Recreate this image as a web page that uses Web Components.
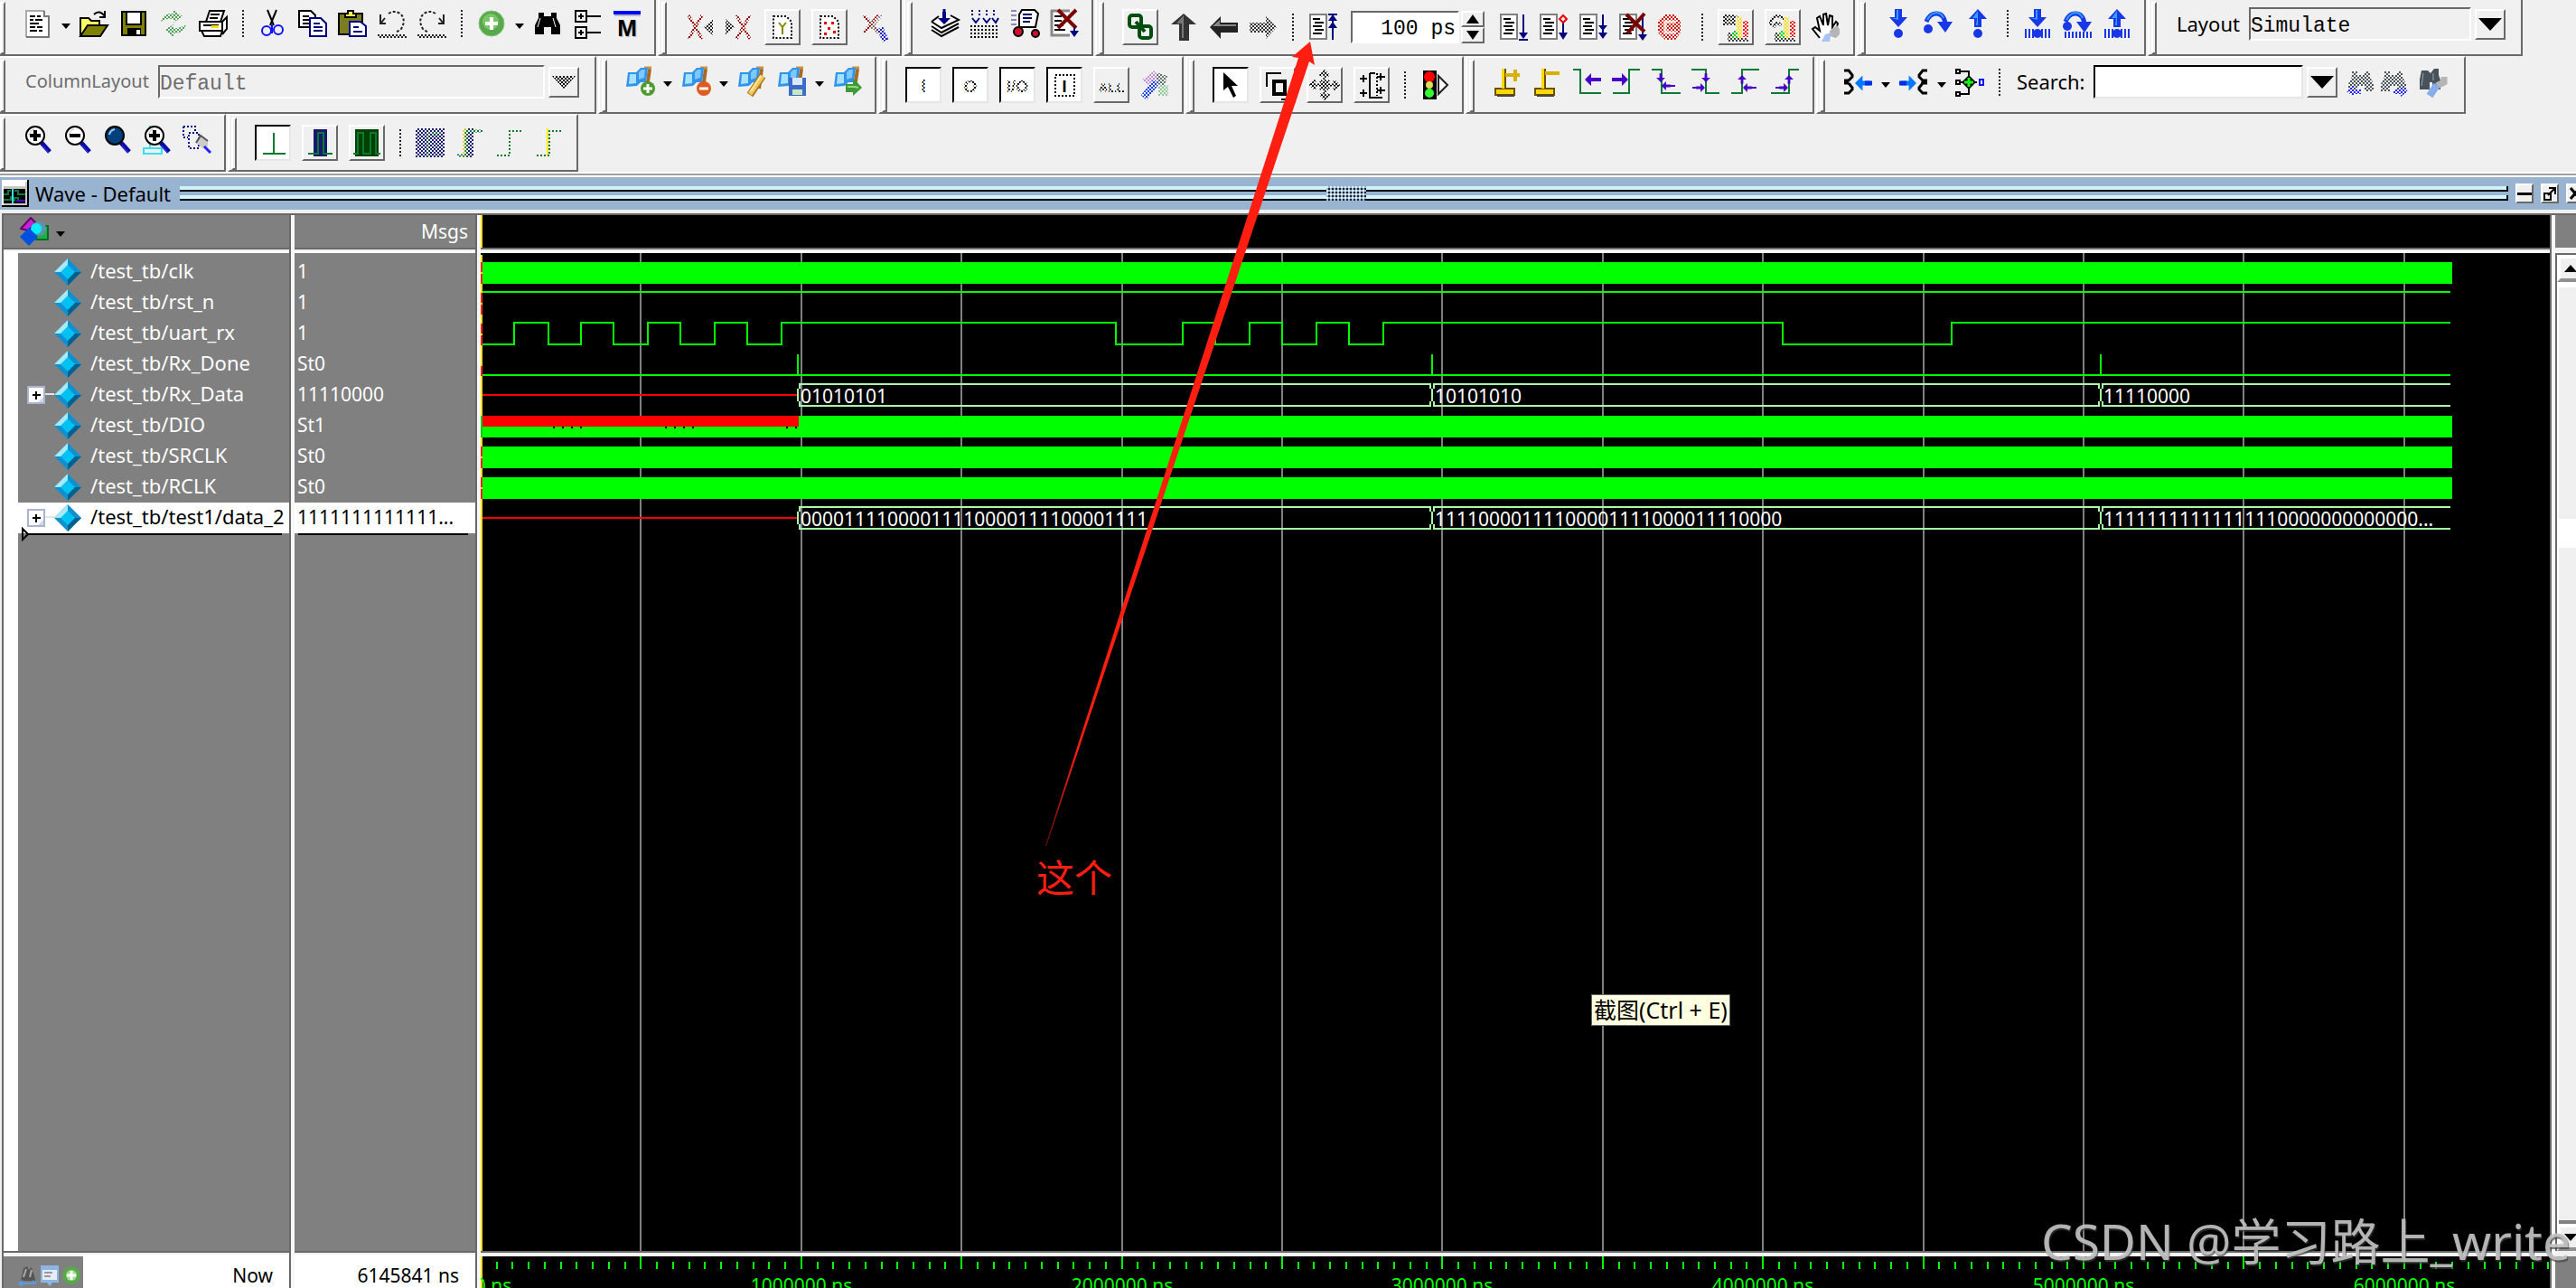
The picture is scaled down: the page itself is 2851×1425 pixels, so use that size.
<!DOCTYPE html>
<html lang="en">
<head>
<meta charset="utf-8">
<title>Wave - Default</title>
<style>
html,body{height:100%;margin:0}
body{background:#f0f0f0;overflow:hidden;font-family:"Noto Sans","Noto Sans CJK SC",sans-serif;font-size:22px;color:#000}
</style>
</head>
<body>
<sim-app></sim-app>
<script>
const define=(name,html,setup)=>customElements.define(name,class extends HTMLElement{
  connectedCallback(){
    if(this.shadowRoot)return;
    const t=document.createElement('template');
    t.innerHTML=typeof html==='function'?html(this):html;
    this.attachShadow({mode:'open'}).append(t.content.cloneNode(true));
    if(setup)setup(this,this.shadowRoot);
  }
});

/* ---------- icons, drawn on a 32 x 32 grid ---------- */
const P=(d,c='#000',w=2,f='none')=>`<path d="${d}" stroke="${c}" stroke-width="${w}" fill="${f}"/>`;
const F=(d,c)=>`<path d="${d}" fill="${c}"/>`;
const C=(x,y,r,f,s='none',w=2)=>`<circle cx="${x}" cy="${y}" r="${r}" fill="${f}" stroke="${s}" stroke-width="${w}"/>`;
const T=(x,y,s,t,c='#000',b='400')=>`<text x="${x}" y="${y}" font-size="${s}" font-weight="${b}" text-anchor="middle" font-family="Liberation Sans,sans-serif" fill="${c}">${t}</text>`;
const lens=m=>P('M20 20L29 30','#0a0aa8',5)+P('M21 23L28 31','#3c3cff',1)+C(13,12,10,m==='full'?'#00407c':'#fff','#000')+(m==='full'?P('M7 11Q8 6 13 5','#9cc8e8',2):P('M6 12Q7 6 12 5','#bbb',1));
const sheet=F('M1 1H21V29H1Z','#fff')+P('M2 1V29M1 29H21M20 2V29M1 2H21','#808080')+P('M5 7H13M7 11H17M5 15H15M7 19H17M5 23H15');
const flag=P('M27 2L24 24','#a86a20',4)+P('M21 1H29','#c89048',3)+F('M3 6H12L17 1H25L23 17H17L13 21L1 22Z','#2f94ea')+F('M5 8H12L12 18L4 19Z','#a8e2ff')+F('M15 6L18 3H22L21 12L15 14Z','#7cc8fa');
const binoc=F('M6 4H12V8H20V4H26V10L30 18V28H20V20H12V28H2V18L6 10Z','#000')+P('M8 10L5 20M22 10L25 20','#fff',1);
const binocDim=F('M6 4H12V8H20V4H26V10L30 18V26H20V20H12V26H2V18L6 10Z','#4a545c');
const edgeDown='M1 3H9V29H24';
const arrowL=(x,y,c='#4400c8',s=1)=>F(`M${x} ${y}l${7*s} ${-7*s}v${5*s}h${7*s}v${4*s}h${-7*s}v${5*s}z`,c);
const arrowR=(x,y,c='#4400c8',s=1)=>F(`M${x} ${y}l${-7*s} ${-7*s}v${5*s}h${-7*s}v${4*s}h${7*s}v${5*s}z`,c);
const arrowU=(x,y,c='#4400c8',s=1)=>F(`M${x} ${y}l${7*s} ${7*s}h${-5*s}v${7*s}h${-4*s}v${-7*s}h${-5*s}z`,c);
const arrowD=(x,y,c='#4400c8',s=1)=>F(`M${x} ${y}l${7*s} ${-7*s}h${-5*s}v${-7*s}h${-4*s}v${7*s}h${-5*s}z`,c);
const blueD=F('M12 0H20V9H26L16 20L6 9H12Z','#1838e8')+F('M14 1H16V12L9 10H14Z','#30a0ff');
const blueU=F('M16 0L26 11H20V20H12V11H6Z','#1838e8')+F('M16 3L14 18H16Z','#30a0ff')+F('M16 2L10 10H16Z','#30a0ff');
const over=P('M3 14Q7 4 15 5Q23 6 24 17','#1838e8',5)+P('M4 12Q8 4 15 4Q20 5 22 10','#30a0ff',2)+F('M15 14H32L24 26Z','#1838e8');
const bars=P('M3 22V32M7 22V32M11 22V32M21 22V32M25 22V32M29 22V32','#1838e8',2);
const bulbs=F('M17 5h6v24h-6z','#fd0')+F('M24 9h6v18h-6z','#e11')+F('M12 20h6v8h-6z','#0c1')+F('M7 22h5v10h-5zM12 28h18v4h-18z','#444');
const tower=x=>F('M3 24H24V31H3Z','#ffd800')+P('M3 24H24V31H3Z','#6b5000',2)+P('M12 2V24','#ffd800',4)+P('M14 2V24','#6b5000',2)+P(x,'#d8b000',4)+P('M5 32H24','#444',2);
const I={
newdoc:F('M3 2H23L28 8V31H3Z','#fff')+P('M3 31V2H23','#aaa',2)+P('M23 2V8H28V31H3','#777')+P('M7 8H13M15 8H19M7 12H11M13 12H21M7 16H17M7 20H13M15 20H21M7 24H15M17 24H21'),
open:F('M1 10H10L13 13H22V18H10L1 30Z','#ffff66')+P('M1 30V10H10L13 13H22V18')+F('M1 30L9 18H31L23 30Z','#808000')+P('M1 30L9 18H31L23 30Z')+P('M16 6Q22 0 28 8M28 2V9H22'),
save:F('M2 3H30V30H2Z','#808000')+P('M3 3H29V29H3Z')+F('M8 4H24V17H8Z','#fff')+P('M8 4V17H24V4')+F('M9 21H24V29H9Z','#000')+F('M19 23H23V28H19Z','#fff'),
refresh:F('M2 14Q4 4 16 5V1L26 8L16 15V11Q8 10 2 14Z','#4aa050')+F('M30 16Q28 27 16 27V31L6 23L16 17V21Q24 22 30 16Z','#4aa050'),
print:F('M8 14L12 1H28L24 14Z','#fff')+P('M8 14L12 2H28L24 14M13 6H23M12 10H21')+F('M1 14H27L31 10V24L25 30H5L1 26Z','#fff')+P('M1 14H26V24H1ZM26 14L31 9V22L26 28M3 24L6 30H24L26 24M5 18H22','#000',2)+F('M14 18H22V21H14Z','#fd0'),
cut:P('M10 1L17 18M20 1L13 18')+C(9,24,5,'none','#1010ff')+C(22,23,5,'none','#1010ff')+P('M15 17V27','#1010ff'),
copy:F('M1 2H15L19 6V20H1Z','#fff')+P('M1 2H14L19 7V20H1ZM5 8H12M5 12H12M5 16H12')+F('M13 10H25L31 16V30H13Z','#fff')+P('M13 10H25L31 16V30H13ZM17 16H24M17 20H27M17 24H27','#000080'),
paste:F('M1 5H27V28H1Z','#7c7c20')+P('M1 5H27V28H1Z')+F('M8 4H20V10H8Z','#ee4')+P('M8 9V5H11V2H17V5H20V9Z')+F('M13 14H25L31 19V30H13Z','#fff')+P('M13 14H25L31 19V30H13ZM17 20H23M17 25H27','#000080'),
undo:P('M3 6V16H9M4 15L8 10','#222',2)+P('M12 5Q18 1 25 5Q32 12 26 22L20 26','#222','2" stroke-dasharray="3 2')+P('M0 29H31','#222','2" stroke-dasharray="2 2')+P('M2 31H33','#222','2" stroke-dasharray="2 2'),
redo:P('M29 6V16H23M28 15L24 10','#222',2)+P('M20 5Q14 1 7 5Q0 12 6 22L12 26','#222','2" stroke-dasharray="3 2')+P('M0 29H31','#222','2" stroke-dasharray="2 2')+P('M2 31H33','#222','2" stroke-dasharray="2 2'),
add:`<ellipse cx="16" cy="16" rx="14" ry="14" fill="#59a84c" stroke="#7fc474" stroke-width="1"/>`+C(15,14,9,'#79c568')+P('M16 9V23M9 16H23','#fff',4),
find:binoc,
tree:P('M3 2H15V14H3ZM3 20H15V32H3ZM9 5V11M6 8H12M9 23V29M6 26H12M15 8H31M15 26H31'),
mod:F('M1 2H31V6H1Z','#00f')+F('M2 6H31V8H2Z','#bbb')+T(17,31,26,'M','#bbb','700')+T(16,30,26,'M','#000','700'),
xL:P('M4 3L19 29M19 3L4 29','#900',3)+F('M31 7L21 16L31 25Z','#222'),
xR:P('M13 3L28 29M28 3L13 29','#900',3)+F('M1 7L11 16L1 25Z','#222'),
docY:F('M5 3H20L27 10V29H5Z','#fff')+P('M6 4H20L26 10V28H6Z','#000','2" stroke-dasharray="2 2')+P('M12 11L16 16L20 11M16 16V24','#880',2),
docX:F('M5 3H20L27 10V29H5Z','#fff')+P('M6 4H20L26 10V28H6Z','#000','2" stroke-dasharray="2 2')+F('M10 10h3v3h-3zM18 10h3v3h-3zM14 16h3v3h-3zM10 22h3v3h-3zM20 20h3v3h-3z','#e00'),
xwand:P('M6 3L22 22M22 3L6 22','#900',3)+P('M10 6L26 24M26 3L14 18','#777',2)+P('M24 17L30 31','#22c',7),
compile:F('M1 14L16 6L31 14L31 22L12 31L1 24Z','#fff')+P('M1 23L12 30L31 20M1 19L12 26L31 16M1 14L12 21L31 12L22 7M1 14L9 8')+arrowD(15,17,'#000080',1)+P('M15 0V10','#000080',3),
compAll:P('M2 1V7M10 1V7M18 1V7M26 1V7','#000080','2" stroke-dasharray="2 2')+P('M2 10L6 15L10 10M14 10L18 15L22 10M24 10L28 15L31 10','#000080')+[19,23,27,31].map(y=>P(`M0 ${y}H32`,'#000','2" stroke-dasharray="2 2')).join(''),
sim:P('M1 2H7M1 7H7M1 12H7M1 17H7','#8888bb',2)+F('M11 1H29L31 5L27 19H11L8 23V14Z','#fff')+P('M10 20V6L13 1H27L31 5L28 20H11')+P('M14 6H24M14 10H24M14 14H22','#000060')+C(9,25,5,'#d0102a','#000',2)+C(28,27,4,'#d0102a','#000',2),
brk:F('M1 1H22V29H1Z','#fff')+P('M2 1V29H22M1 2H22','#888',3)+P('M5 8H13M5 13H13M5 18H15M5 23H17')+P('M9 1L29 21M29 1L9 21','#7a0000',4)+P('M27 20V30','#000080')+F('M22 24H32L27 31Z','#000080'),
link:`<rect x="4" y="3" width="13" height="13" rx="3" fill="none" stroke="#004d10" stroke-width="4"/><rect x="15" y="15" width="13" height="13" rx="3" fill="none" stroke="#004d10" stroke-width="4"/>`+P('M11 10L21 21','#004d10',4),
up:F('M16 1L30 13H22V31H11V13H2Z','#333')+F('M16 3L8 12H14V28H16Z','#777'),
left:F('M1 16L13 4V11H32V22H13V29Z','#222')+F('M4 15L12 8V13H30V15Z','#888'),
right:F('M31 16L19 4V11H1V22H19V29Z','#333'),
restart:sheet+P('M27 30V3','#000080')+F('M27 2L32 9H22ZM27 10L32 17H22Z','#000080')+P('M22 2H32','#000080'),
run:sheet+P('M27 2V24','#000080')+F('M22 22H32L27 29Z','#000080')+P('M22 30H32','#000080'),
cont:sheet+P('M27 10V24','#000080')+F('M22 22H32L27 30Z','#000080')+P('M27 3L31 7L27 11L23 7Z','#e00'),
runall:sheet+P('M27 2V24','#000080')+F('M22 14H32L27 20ZM22 22H32L27 29Z','#000080'),
brkrun:sheet+P('M27 2V28','#000080')+P('M9 2L29 21M29 1L10 23','#7a0000',4)+F('M22 24H32L27 31Z','#000080'),
stop:F('M8 2H19L25 9V22L19 30H8L0 22V9Z','#d01808')+P('M20 10H8V22H20','#f6d0cc',3),
bulb1:P('M2 4H14M2 8H14M2 12H14M14 4V14M4 2V14','#111',3)+P('M14 4Q20 4 20 10','#333')+bulbs,
bulb2:P('M2 14Q4 2 12 4Q20 6 22 16M6 16Q10 8 14 14','#111',3)+bulbs,
hand:F('M9 30L2 18L5 16L9 19L7 5L10 4L13 14L13 2L16 1L18 14L20 3L23 4L23 16L27 10L29 12L25 24L22 30Z','#fff')+P('M9 28L1 18L4 16L9 20L6 6L9 4L13 14L13 2L16 1L18 14L20 3L23 4L23 16L27 10L29 12L25 24','#000')+F('M20 20L28 14L31 18V24L27 28L20 26Z','#b5b5b5')+F('M15 24L22 22L20 32H11Z','#a8c4ee'),
stepin:blueD+C(16,27,5,'#1838e8'),stepover:over+C(5,22,5,'#1838e8'),stepout:blueU+C(16,27,5,'#1838e8'),
stepin2:blueD+C(16,27,5,'#1838e8')+bars,stepover2:over+C(5,19,5,'#1838e8')+P('M3 25V32M7 25V32M11 25V32M15 25V32M19 25V32M23 25V32M27 25V32M31 25V32','#1838e8',2),stepout2:blueU+C(16,27,5,'#1838e8')+bars,
bkadd:flag+C(25,24,8,'#4d9a2c')+P('M25 19V29M20 24H30','#fff',3),
bkdel:flag+C(25,24,8,'#e05a20')+P('M20 24H30','#fff',3),
bkedit:flag+P('M28 10L14 31','#b07820',8)+P('M28 10L14 30','#f0c860',5)+P('M26 10L15 27','#ffe898',2),
bksave:flag+F('M13 12H32V32H13Z','#3c6cc8')+F('M17 12H28V20H17Z','#dce8ff')+F('M17 25H28V31H17Z','#c6e8c0'),
bkgo:flag+F('M14 19H22V12L32 23L22 32V28H14Z','#3d9a35')+P('M16 22H24L28 23','#95da80',2),
tI:T(16,24,20,'I','#000','700'),tO:T(16,24,19,'O','#000','700'),tIO:T(16,24,18,'I/O','#000','700'),
tInt:P('M6 5H27V28H6Z','#000','2" stroke-dasharray="2 2')+T(16,24,18,'I','#000','700'),tAll:T(16,24,15,'ALL','#000','700'),
wand:F('M2 10L16 0L20 8L8 16Z','#c890d4')+F('M18 2L30 6L26 20L18 12Z','#66756e')+F('M20 16H31V28H20Z','#90c89a')+P('M4 30L18 12','#1840e8',8),
ptr:F('M8 2L8 22L13 18L19 30L22 28L17 17H24Z','#000'),
zoombox:P('M4 18V3H20')+P('M12 12H24V26H12Z','#000',4)+P('M20 32H30V22'),
pan:P('M16 1V31M1 16H31','#000',3)+P('M11 6L16 1L21 6M11 26L16 31L21 26M6 11L1 16L6 21M26 11L31 16L26 21','#000',3)+P('M11 11L21 21M21 11L11 21','#000',3),
edit2:P('M3 9H11M7 5V13M3 25H11M7 21V29M14 3H20M14 3V30H28')+P('M22 7H31M26 3V11M22 22H31M26 18V26')+P('M22 3V28','#000','2" stroke-dasharray="2 2'),
light:F('M3 0H18V32H3Z','#000')+C(10,7,6,'#f00')+C(10,16,4,'#dd5')+C(10,25,5,'#3f3')+F('M21 6L30 16L21 26Z','#fff')+P('M20 6V26L30 16Z','#222'),
curadd:tower('M14 9H30M25 3V16'),curdel:tower('M14 7H30'),
prevT:P(edgeDown+'H32','#0a7a35')+arrowL(14,14,'#4400c8',1)+P('M20 14H32','#4400c8',4),
nextT:P('M1 29H19V3H31','#0a7a35')+arrowR(18,14)+P('M0 14H10','#4400c8',4),
prevF:P('M0 3H11V29H32','#0a7a35')+arrowD(10,17,'#4400c8',.7)+arrowL(11,21,'#4400c8',.7)+P('M18 21H26','#4400c8'),
nextF:P('M0 3H16V29H31','#0a7a35')+arrowD(16,17,'#4400c8',.7)+arrowR(15,23,'#4400c8',.7)+P('M1 23H8','#4400c8'),
prevR:P('M0 29H12V3H31','#0a7a35')+arrowU(12,9,'#4400c8',.7)+arrowL(13,23,'#4400c8',.7)+P('M20 23H28','#4400c8'),
nextR:P('M0 29H20V3H31','#0a7a35')+arrowU(20,9,'#4400c8',.7)+arrowR(19,23,'#4400c8',.7)+P('M5 23H12','#4400c8'),
merge:P('M1 3H6L10 8V10L6 14H1M6 17H1M6 17L10 22V24L6 28H1','#000',3)+arrowL(13,17,'#0078ff',1.2)+P('M24 17H32','#0030e0',5),
split:P('M31 3H26L22 8V10L26 14H31M24 17H31M26 17L22 22V24L26 28H31','#000',3)+arrowR(19,17,'#0078ff',1.2)+P('M0 17H8','#0030e0',5),
nodes:P('M1 2H5V6H1ZM1 14H5V18H1ZM1 27H5V31H1Z')+P('M5 4H15V29H5M5 16H24')+F('M15 8L23 16L15 24L7 16Z','#000')+P('M15 11V21M10 16H20','#1f1',3)+P('M27 13H31V19H27Z','#11f'),
findL:binocDim+F('M0 26L8 19V24H16V29H8V32Z','#22f'),
findR:binocDim+F('M32 26L24 19V24H16V29H24V32Z','#22f'),
findO:F('M3 3H10L13 6L17 1H22V8L24 14V24H15V16H12V24H1V13Z','#48525c')+P('M5 6L3 20M16 6V14','#9aa6b0',1)+P('M28 10V16L20 20','#b5b5b5',7)+P('M20 19L12 31','#86aee8',8),
zin:lens()+P('M13 6V18M7 12H19','#000',4),zout:lens()+P('M7 12H19','#000',4),zfull:lens('full'),
zcur:P('M1 26H21V32H1ZM8 1V26','#38e0f0')+lens()+P('M13 6V18M7 12H19','#000',4),
zreg:P('M1 2H14V8M1 2V14H6M7 9H18V26H7Z','#000080','2" stroke-dasharray="2 2')+F('M20 12L28 17V24L22 26L15 20Z','#ccc')+P('M15 20L20 12L28 18','#555',2)+P('M24 24L31 31','#22f',3),
w1:P('M17 5V28M5 28H30','#0a7a30'),
w2:F('M9 1H24V31H9Z','#181870')+P('M3 28H14V5H20V28H30','#0a7a30'),
w3:F('M3 1H29V31H3Z','#004000')+P('M1 28H6V5H12V28H20V5H26V28H31','#0a7a30'),
p1:F('M0 0H32V32H0Z','#181870')+P('M14 32V5H30','#0a7a30'),
p2:F('M12 0H20V32H12Z','#181870')+P('M10 0V32','#ec0',3)+P('M2 30H12V3H30','#0a7a30',3),
p3:P('M2 30H16V3H30','#0a7a30','2" stroke-dasharray="2 2'),
p4:P('M14 0V30','#fe0')+P('M2 30H16V3H30','#0a7a30','2" stroke-dasharray="2 2')
};

/* ---------- toolbar parts ---------- */
define('tool-bar',`<style>
:host{display:flex;box-sizing:border-box;height:64px;flex:none;border:2px solid #696969;border-top-color:#fff;border-left-color:#fff;padding-right:8px}
.grip{width:2px;height:54px;margin:2px 14px 0 2px;border:2px solid #696969;border-left-color:#fff;border-top-color:#fff}
.in{display:flex;align-items:center;align-self:flex-start;padding-top:10px}
:host([fields]) .in{padding-top:8px}
</style><div class="grip"></div><div class="in"><slot></slot></div>`);

define('tool-button',el=>`<style>
:host{display:block;flex:none}
button{appearance:none;display:block;box-sizing:border-box;border:0;padding:0;background:none;width:32px;height:32px;margin:0 6px}
svg{display:block;width:32px;height:32px;overflow:visible}
:host([kind]) button{width:40px;height:40px;border:2px solid #696969;border-top-color:#fff;border-left-color:#fff;padding:2px}
:host([kind=on]) button{background:#fff;border-color:#000 #e6e6e6 #e6e6e6 #000}
:host([slim]) button{margin:0 2px}
:host([wide]) button{margin:0 10px}
</style><button type="button" aria-label="${el.getAttribute('icon')}"><svg viewBox="0 0 32 32">${I[el.getAttribute('icon')]}${el.hasAttribute('dim')?`<pattern id="d" width="4" height="4" patternUnits="userSpaceOnUse"><path d="M0 0h2v2h-2zM2 2h2v2h-2z" fill="${el.getAttribute('kind')==='on'?'#fff':'#f0f0f0'}"/></pattern><rect x="0" y="0" width="32" height="32" fill="url(#d)" shape-rendering="crispEdges"/>`:''}</svg></button>`);

define('tool-sep',`<style>:host{display:block;flex:none;width:2px;height:30px;margin:0 10px;background:repeating-linear-gradient(#222 0 2px,transparent 2px 4px)}</style>`);
define('drop-arrow',`<style>:host{display:block;flex:none}button{display:flex;border:0;background:none;padding:6px 0 0;width:18px;height:32px;align-items:center;justify-content:center}svg{display:block}</style><button type="button" aria-label="more"><svg width="10" height="6"><path d="M0 0H10L5 6Z"/></svg></button>`);

define('field-box',el=>{
  const v=el.getAttribute('value')||'',off=el.hasAttribute('off')?'disabled':'';
  return `<style>
:host{display:flex;align-items:center;flex:none;margin-right:9px}
:host([search]){margin-right:8px}
label{font-size:22px;line-height:32px;margin:0 10px 0 8px;padding-bottom:2px;white-space:nowrap}
:host([off]) label{font-size:20px}
:host([off]){color:#6d6d6d}
select,input{appearance:none;box-sizing:border-box;height:37px;width:var(--w);margin:0 4px 0 0;border:2px solid #696969;border-right-color:#fff;border-bottom-color:#fff;border-radius:0;background:#f0f0f0;padding:5px 0 0;font:23px/28px "Liberation Mono",monospace;color:#000;opacity:1}
select:disabled{color:#6d6d6d;opacity:1}
input{background:#fff;border-color:#000 #e6e6e6 #e6e6e6 #000}
button{box-sizing:border-box;width:34px;height:34px;padding:0;border:2px solid #696969;border-top-color:#fff;border-left-color:#fff;background:#f0f0f0;display:flex;align-items:center;justify-content:center}
</style><label for="f">${el.getAttribute('label')}</label>${el.hasAttribute('search')?'<input id="f" type="text">':`<select id="f" ${off}><option>${v}</option></select>`}
<button type="button" aria-label="open" ${off}><svg width="26" height="14"><pattern id="h" width="4" height="4" patternUnits="userSpaceOnUse"><path d="M0 0h2v2h-2zM2 2h2v2h-2z"/></pattern><path d="M0 0H26L13 14Z" fill="${off?'url(#h)':'#000'}"/></svg></button>`});

define('time-spin',`<style>
:host{display:flex;flex:none;margin:0 10px 0 9px;gap:2px}
input{box-sizing:border-box;width:120px;height:36px;border:2px solid #696969;border-right-color:#fff;border-bottom-color:#fff;padding:3px 2px 0;text-align:right;font:23px/28px "Liberation Mono",monospace;background:#fff}
div{display:flex;flex-direction:column}
button{box-sizing:border-box;width:26px;height:18px;padding:0;border:2px solid #696969;border-top-color:#fff;border-left-color:#fff;background:#f0f0f0;display:flex;align-items:center;justify-content:center}
</style><input aria-label="Run length" value="100 ps"><div><button type="button" aria-label="more"><svg width="14" height="10"><path d="M7 0L14 10H0Z"/></svg></button><button type="button" aria-label="less"><svg width="14" height="10"><path d="M0 0H14L7 10Z"/></svg></button></div>`);

/* ---------- window title ---------- */
define('pane-title',`<style>
:host{display:flex;align-items:center;height:36px;flex:none;background:#99b4d1;padding-left:2px;overflow:hidden}
.ico{flex:none;margin-right:7px}
span{font-size:22px;line-height:32px;margin-right:10px;white-space:nowrap}
.rails{flex:1;height:16px;display:flex;flex-direction:column;gap:4px;justify-content:center;position:relative}
.rails i{height:4px;border-bottom:2px solid #000;border-right:2px solid #000;background:#cff4ff}
.rails svg{position:absolute;left:calc(50% - 20px);top:0;background:#99b4d1}
nav{display:flex;gap:8px;margin-left:8px;width:67px;flex:none}
button{flex:none;width:20px;height:22px;padding:0;box-sizing:border-box;border:2px solid #696969;border-top-color:#fff;border-left-color:#fff;background:#f0f0f0}
nav svg{display:block}
</style>
<svg class="ico" width="30" height="30"><path d="M0 0H30V30H0Z" fill="#000"/><path d="M0 0H28V28H0Z" fill="#fff"/><path d="M2 2H28V28H2Z" fill="#c6c6c6"/><path d="M2 2H26V7H2Z" fill="#fff"/><path d="M2 10H26V26H2Z"/><path d="M2 16H7V12H10M2 22H10V18M14 12H18V16H26M14 24V20H18V24" stroke="#0a7a35" stroke-width="2" fill="none"/><path d="M12 10V26" stroke="#38e0f0" stroke-width="2"/><path d="M16 23H26" stroke="#40c" stroke-width="2"/></svg>
<span>Wave - Default</span>
<div class="rails"><i></i><i></i><svg width="44" height="16"><pattern id="g" width="4" height="4" patternUnits="userSpaceOnUse"><path d="M0 0h2v2h-2z" fill="#dff6ff"/><path d="M2 2h2v2h-2z" fill="#222"/></pattern><rect width="44" height="16" fill="url(#g)" shape-rendering="crispEdges"/></svg></div>
<nav><button type="button" aria-label="minimize"><svg width="16" height="18"><path d="M0 8H16V11H0Z"/></svg></button><button type="button" aria-label="undock"><svg width="16" height="18"><path d="M2 9H9V16H2ZM6 11L13 4M7 3H14V10" fill="none" stroke="#000" stroke-width="2"/></svg></button><button type="button" aria-label="close"><svg width="16" height="18"><path d="M3 3L13 15M13 3L3 15" stroke="#000" stroke-width="3"/></svg></button></nav>`);

/* ---------- columns of the wave window ---------- */
define('wave-pane',`<style>
:host{display:flex;flex-direction:column;box-sizing:border-box;border-right:2px solid #696969;margin-right:4px;min-width:0;background:#fff}
.head{height:36px;flex:none}
.rule{height:2px;flex:none;border-top:2px solid #696969;border-bottom:2px solid #fff;background:#f0f0f0}
.body{flex:1;min-height:0;overflow:hidden}
.foot{height:35px;flex:none;overflow:hidden}
</style><div class="head"><slot name="head"></slot></div><div class="rule"></div><div class="body"><slot></slot></div><div class="rule"></div><div class="foot"><slot name="foot"></slot></div>`);

const signals=[
 ['/test_tb/clk','1'],['/test_tb/rst_n','1'],['/test_tb/uart_rx','1'],['/test_tb/Rx_Done','St0'],
 ['/test_tb/Rx_Data','11110000',1],['/test_tb/DIO','St1'],['/test_tb/SRCLK','St0'],['/test_tb/RCLK','St0'],
 ['/test_tb/test1/data_2','1111111111111...',1]];
const gem='<svg class="gem" width="30" height="30"><path d="M15 0L30 15L15 30L0 15Z" fill="#1190cf"/><path d="M15 0L0 15H8L15 8Z" fill="#a6eafa"/><path d="M30 15L15 30V22L22 15Z" fill="#00608e"/><path d="M15 7L23 15L15 23L7 15Z" fill="#00c2f2"/></svg>';
const plus='<svg width="30" height="20"><path d="M20 9H30" stroke="#e4e4e4" stroke-width="2"/><path d="M0 0H20V20H0Z" fill="#aab4cc"/><path d="M2 2H18V18H2Z" fill="#fff"/><path d="M12 18L18 12V18Z" fill="#cfd8ea"/><path d="M6 10H15M10 6V15" stroke="#000" stroke-width="2"/></svg>';

define('signal-names',()=>`<style>
:host{display:block;box-sizing:border-box;height:100%;background:#808080;border-left:16px solid #fff;padding-top:4px;color:#fff}
ul{list-style:none;margin:0;padding:0}
li{display:flex;align-items:center;height:34px;box-sizing:border-box;padding-left:10px;line-height:30px;white-space:nowrap}
li span:last-child{padding-bottom:4px}
.x{width:30px;height:20px;flex:none}
.x svg{display:block}
.gem{flex:none;margin-right:10px}
li:last-child{background:#fff;color:#000}
.end{position:relative;margin:0 8px 0 10px;border-top:2px solid #000}
.end svg{position:absolute;left:-6px;top:-9px}
</style><ul>${signals.map(s=>`<li><span class="x">${s[2]?plus:''}</span>${gem}<span>${s[0]}</span></li>`).join('')}</ul><div class="end"><svg width="8" height="16"><path d="M1 2V14L7 8Z" fill="none" stroke="#000" stroke-width="2"/></svg></div>`);

define('signal-values',()=>`<style>
:host{display:block;box-sizing:border-box;height:100%;background:#808080;padding-top:4px;color:#fff}
ul{list-style:none;margin:0;padding:0}
li{height:34px;line-height:32px;padding-left:3px;font-size:21px;white-space:nowrap}
li:last-child{background:#fff;color:#000}
.end{margin:0 8px 0 4px;border-top:2px solid #000}
</style><ul>${signals.map(s=>`<li>${s[1]}</li>`).join('')}</ul><div class="end"></div>`);

/* ---------- traces: x is in pixels from time zero, one row every 34 px ---------- */
const STEP=1774,rowY=i=>4+34*i,R=(x,y,w,h,c)=>`<rect x="${x}" y="${y}" width="${w}" height="${h}" fill="${c}"/>`;
const END=2180,G='#0f0',B='#a8ffa8';
const grid=n=>Math.round(n*STEP/10);
const band=i=>R(2,rowY(i)+6,END,24,G);
function uart(){
  const xs=[37,75,111,147,185,221,259,295,333,703,777,813,851,887,925,961,999,1441,1628],y=rowY(2);
  let d=`M2 ${y+29}`,hi=false;
  xs.forEach(x=>{d+=`H${x}V${hi?y+29:y+5}`;hi=!hi});
  return `<path d="${d}H${END}" fill="none" stroke="${G}" stroke-width="2"/>`;
}
function bus(i,vals){
  const y=rowY(i),xs=[351,1053,1793];
  let s=R(2,y+16,348,2,'#f00');
  xs.forEach((x,k)=>{
    const to=k<2?xs[k+1]-2:END;
    s+=`<path d="M${x} ${y+10}V${y+24}M${x+2} ${y+10}V${y+5}H${to}${k<2?`V${y+10}M${to} ${y+24}V${y+29}`:`M${to} ${y+29}`}H${x+2}V${y+24}" fill="none" stroke="${B}" stroke-width="2"/>`;
    s+=`<text x="${x+3}" y="${y+26}">${vals[k]}</text>`;
  });
  return s;
}
define('wave-canvas',()=>{
  let s='';
  for(let n=1;n<13;n++)s+=R(grid(n)-1,0,2,'100%','#808080');
  s+=band(0)+R(2,rowY(1)+4,END-2,2,G)+uart();
  s+=R(2,rowY(3)+28,END-2,2,G)+[351,1053,1793].map(x=>R(x-1,rowY(3)+6,2,22,G)).join('');
  s+=bus(4,['01010101','10101010','11110000']);
  s+=band(5)+R(2,rowY(5)+6,350,12,'#f00')+[80,90,100,110,204,214,224,234,338,348].map(x=>R(x,rowY(5)+18,2,2,'#000')).join('');
  s+=band(6)+band(7)+bus(8,['00001111000011110000111100001111','11110000111100001111000011110000','11111111111111110000000000000...']);
  s+=R(0,2,2,'100%','#fd0')+[0,1,2,6,7].map(i=>R(0,rowY(i)+6,2,11,'#f21')+R(0,rowY(i)+19,2,11,'#f21')).join('')+R(0,rowY(3)+19,2,11,'#f21')+R(0,rowY(5)+6,2,24,'#0c0');
  return `<style>:host{display:block;height:100%;background:#000}svg{display:block;width:100%;height:100%}text{font-size:21px;fill:#fff}</style><svg shape-rendering="crispEdges">${s}</svg>`;
});
define('time-ruler',()=>{
  let s=R(0,0,2,'100%','#fd0');
  for(let n=1;n<130;n++){const x=Math.round(n*STEP/100)-1;s+=n%10?R(x,6,2,8,G):R(x,0,2,14,G)}
  for(let n=0;n<7;n++)s+=`<text x="${n?grid(2*n):14}" y="40">${n?n+'000000':0} ns</text>`;
  return `<style>:host{display:block;height:100%;background:#000}svg{display:block;width:100%;height:35px}text{font-size:21px;fill:#0f0;text-anchor:middle}</style><svg shape-rendering="crispEdges">${s}</svg>`;
});
define('side-scroll',`<style>
:host{display:flex;flex-direction:column;width:23px;flex:none;overflow:hidden;background:#fff}
.cap{height:36px;flex:none;background:#808080}
.gap{height:6px;flex:none;background:#f4f4f4}
.bar{flex:1;display:flex;flex-direction:column;border-left:2px solid #696969;border-top:2px solid #696969;background:#fff}
button{width:34px;height:30px;flex:none;box-sizing:border-box;padding:0;border:solid #909090;border-width:4px;border-top-color:#fff;border-left-color:#fff;background:#f0f0f0;display:flex;align-items:center;justify-content:flex-start}
.thumb{height:256px;margin:6px 0 32px 2px;background:#f0f0f0;flex:none}
.rest{flex:1;margin-left:2px;background:#f0f0f0;border-bottom:4px solid #808080}
.foot{height:41px;flex:none;box-sizing:border-box;border-top:6px solid #f0f0f0;background:#808080}
svg{margin-left:4px;flex:none}
</style><div class="cap"></div><div class="gap"></div><div class="bar"><button type="button" aria-label="up"><svg width="14" height="8"><path d="M7 0L14 8H0Z"/></svg></button><div class="thumb"></div><div class="rest"></div><button type="button" aria-label="down"><svg width="14" height="8"><path d="M0 0H14L7 8Z"/></svg></button></div><div class="foot"></div>`);

define('name-head',`<style>:host{display:flex;align-items:center;gap:4px;height:100%;padding-left:18px;background:#808080}svg{display:block}</style>
<svg width="32" height="32"><path d="M12 1L18 7L9 15L1 13Z" fill="#c322d6" stroke="#606" stroke-width="2"/><path d="M18 10H31V25H18Z" fill="#1fb040" stroke="#0a6a28" stroke-width="2"/><circle cx="21" cy="13" r="8" fill="#5c94a8"/><circle cx="18" cy="13" r="6" fill="#00f0ff"/><path d="M10 12L20 22L10 32L0 22Z" fill="#0050e0"/></svg><drop-arrow></drop-arrow>`);
define('name-foot',`<style>:host{display:flex;height:100%;background:#fff}div{display:flex;gap:2px;width:72px;padding:9px 0 0 16px;background:#808080}span{margin-left:auto;padding-right:18px;line-height:42px;font-size:21px}</style>
<div><svg width="22" height="24"><path d="M3 18L6 4L10 2L12 6L15 3L19 16V18Z" fill="#555"/><path d="M6 14L9 5M13 14L15 6" stroke="#aaa" stroke-width="2"/><path d="M1 21H20M1 21L5 18M1 21L5 24M20 21L16 18" stroke="#5c9ae0" stroke-width="2"/></svg><svg width="22" height="24"><path d="M1 1H21V20H14L11 24L8 20H1Z" fill="#8db4e4"/><path d="M3 6H19V17H3Z" fill="#e4ecf6"/><path d="M5 9H14M5 13H12" stroke="#999" stroke-width="2"/></svg><svg width="22" height="24"><circle cx="11" cy="12" r="10" fill="#5aa84c"/><circle cx="11" cy="12" r="6" fill="#9bd98c"/><path d="M11 7V17M6 12H16" stroke="#fff" stroke-width="3"/></svg></div><span>Now</span>`);
define('value-head',`<style>:host{display:block;height:100%;background:#808080;color:#fff;text-align:right;padding-right:8px;line-height:36px;font-size:21px}</style>Msgs`);
define('value-foot',`<style>:host{display:block;text-align:right;padding-right:18px;line-height:42px;font-size:21px}</style>6145841 ns`);

/* ---------- notes laid over the window ---------- */
define('note-layer',`<style>
:host{position:absolute;inset:0;pointer-events:none;overflow:hidden}
svg{position:absolute;inset:0;width:100%;height:100%}
.say{position:absolute;left:1147px;top:944px;font-size:42px;line-height:54px;color:#ff1e10}
.tip{position:absolute;left:1761px;top:1100px;box-sizing:border-box;height:35px;padding:0 2px;border:1px solid #646464;background:#ffffe1;font-size:25px;line-height:33px;white-space:nowrap}
.mark{position:absolute;right:6px;bottom:14px;font-size:55px;line-height:76px;white-space:nowrap;color:rgba(196,196,196,.9);text-shadow:1px 2px 1px rgba(60,60,60,.7)}
</style><svg><linearGradient id="f" gradientUnits="userSpaceOnUse" x1="1158" y1="934" x2="1190" y2="830"><stop offset="0" stop-color="#ff1e10" stop-opacity=".5"/><stop offset="1" stop-color="#ff1e10"/></linearGradient><path d="M1157 936L1437 64L1430 63L1450 46L1455 72L1449 68L1158 936Z" fill="url(#f)"/></svg>
<div class="say">这个</div><div class="tip">截图(Ctrl + E)</div><div class="mark">CSDN @学习路上_write</div>`);

const b=(names,extra='')=>names.split(' ').map(n=>{
  if(n==='|')return '<tool-sep></tool-sep>';
  if(n==='v')return '<drop-arrow></drop-arrow>';
  const m=n.match(/^([+=~]*)(.*)$/),k=m[1];
  return `<tool-button icon="${m[2]}" ${k.includes('+')?'kind="raised"':k.includes('=')?'kind="on"':''} ${k.includes('~')?'dim':''} ${extra}></tool-button>`;
}).join('');

/* in the icon lists: + raised, = pressed, ~ unavailable, | divider, v drop-down */
define('sim-app',`<style>
:host{display:flex;flex-direction:column;height:100vh;overflow:hidden;position:relative}
.bars{flex:none;height:190px;overflow:hidden}
.row{display:flex;gap:2px;margin-left:-4px}
.row:first-child{margin-top:-2px}
.edge{height:2px;flex:none;border-top:2px solid #fff;border-bottom:2px solid #fff;background:#a0a0a0}
.win{flex:1;min-height:0;display:flex;margin:4px 0 0 2px;border-left:2px solid #696969;border-top:2px solid #696969;background:#f8f8f8}
.names{width:318px;flex:none}.vals{width:202px;flex:none}.waves{flex:1}
.blank{height:100%;background:linear-gradient(90deg,#fd0 2px,#000 2px)}
</style>
<div class="bars">
<div class="row">
<tool-bar>${b('newdoc v open save ~refresh print | cut copy paste undo redo | add v find tree mod')}</tool-bar>
<tool-bar>${b('~xL ~xR +docY +docX ~xwand')}</tool-bar>
<tool-bar>${b('compile compAll sim brk')}</tool-bar>
<tool-bar>${b('+link up left ~right | restart')}<time-spin></time-spin>${b('run cont runall brkrun ~stop | +~bulb1 +~bulb2 hand')}</tool-bar>
<tool-bar>${b('stepin stepover stepout | stepin2 stepover2 stepout2')}</tool-bar>
<tool-bar fields><field-box label="Layout" value="Simulate" style="--w:246px"></field-box></tool-bar>
</div>
<div class="row">
<tool-bar fields><field-box off label="ColumnLayout" value="Default" style="--w:428px"></field-box></tool-bar>
<tool-bar>${b('bkadd v bkdel v bkedit bksave v bkgo')}</tool-bar>
<tool-bar>${b('=~tI =~tO =~tIO =tInt +~tAll ~wand')}</tool-bar>
<tool-bar>${b('=ptr +zoombox +~pan +edit2 | light')}</tool-bar>
<tool-bar>${b('curadd curdel prevT nextT prevF nextF prevR nextR')}</tool-bar>
<tool-bar fields>${b('merge v split v nodes |')}<field-box search label="Search:" style="--w:232px"></field-box>${b('~findL ~findR','slim')}${b('findO','wide')}</tool-bar>
</div>
<div class="row">
<tool-bar>${b('zin zout zfull zcur zreg')}</tool-bar>
<tool-bar>${b('=w1 +w2 +w3 | ~p1 ~p2 p3 p4')}</tool-bar>
</div>
</div>
<div class="edge"></div>
<pane-title></pane-title>
<div class="win">
<wave-pane class="names"><name-head slot="head"></name-head><signal-names></signal-names><name-foot slot="foot"></name-foot></wave-pane>
<wave-pane class="vals"><value-head slot="head"></value-head><signal-values></signal-values><value-foot slot="foot"></value-foot></wave-pane>
<wave-pane class="waves"><div class="blank" slot="head"></div><wave-canvas></wave-canvas><time-ruler slot="foot"></time-ruler></wave-pane>
<side-scroll></side-scroll>
</div>
<note-layer></note-layer>`);
</script>
</body>
</html>
